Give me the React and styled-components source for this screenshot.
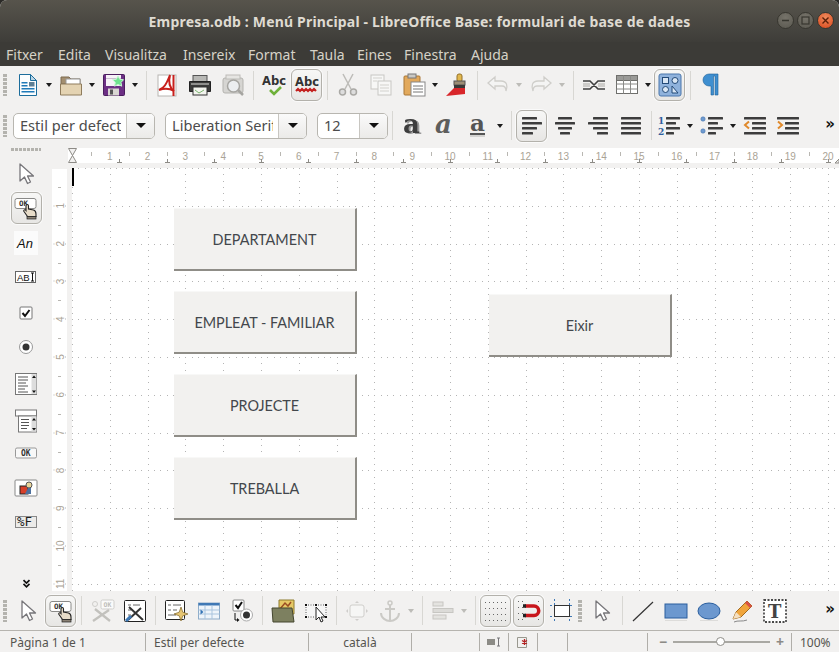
import styled, { createGlobalStyle } from "styled-components";

const GlobalStyle = createGlobalStyle`
  html, body {
    margin: 0;
    padding: 0;
    background: #2b2a27;
    overflow: hidden;
  }
`;

const UI_FONT = `"Noto Sans", "Open Sans", sans-serif`;

const Window = styled.div`
  width: 839px;
  height: 652px;
  display: flex;
  flex-direction: column;
  background: #f2f1f0;
  border-radius: 7px 7px 0 0;
  overflow: hidden;
  font-family: ${UI_FONT};
`;

const TitleBar = styled.div`
  height: 42px;
  position: relative;
  display: flex;
  align-items: center;
  justify-content: center;
  background: linear-gradient(#57544c, #3e3d39);
  color: #dfdbd2;
  font-size: 14px;
  font-weight: 700;
  letter-spacing: 0.18px;
  box-sizing: border-box;
`;

const WindowButtons = styled.div`
  position: absolute;
  right: 5px;
  top: 12px;
  display: flex;
  gap: 3px;
`;

const WinBtn = styled.div`
  width: 17px;
  height: 17px;
  border-radius: 50%;
  box-sizing: border-box;
  border: 1px solid #37362f;
  background: ${(p) => (p.$close ? "radial-gradient(circle at 50% 30%, #f08a5c, #d9481c)" : "radial-gradient(circle at 50% 30%, #76736a, #5a5850)")};
  display: flex;
  align-items: center;
  justify-content: center;
`;

const MenuBar = styled.div`
  height: 24px;
  background: #3c3b37;
  display: flex;
  align-items: flex-start;
  padding: 3px 0 0 6px;
  box-sizing: border-box;
`;

const MenuItem = styled.span`
  width: ${(p) => p.$w}px;
  color: #d6d2c7;
  font-size: 14px;
  line-height: 19px;
  white-space: nowrap;
  font-family: ${UI_FONT};
`;

const Toolbar = styled.div`
  height: ${(p) => p.$h}px;
  flex: none;
  display: flex;
  align-items: center;
  padding: 0 3px;
  box-sizing: border-box;
  background: #f2f1f0;
`;

const Handle = styled.div`
  width: 4px;
  height: 22px;
  margin-right: ${(p) => p.$mr ?? 4}px;
  flex: none;
  background: repeating-linear-gradient(#b4b3ae 0 3px, transparent 3px 4px);
`;

const ToolBtn = styled.div`
  width: ${(p) => p.$w ?? 33}px;
  height: ${(p) => p.$w ?? 33}px;
  flex: none;
  display: flex;
  align-items: center;
  justify-content: center;
  box-sizing: border-box;
  border-radius: 6px;
  ${(p) =>
    p.$on &&
    `
    width: 31px;
    height: 32px;
    margin: 0 1px;
    border: 1px solid #b3b1ab;
    background: linear-gradient(#f7f7f6, #e7e6e4);
    box-shadow: 0 0 0 1px #fafafa;
  `}
`;

const DropArrow = styled.div`
  width: 10px;
  flex: none;
  display: flex;
  justify-content: center;
  &::after {
    content: "";
    border-left: 3.5px solid transparent;
    border-right: 3.5px solid transparent;
    border-top: 4px solid ${(p) => (p.$off ? "#bdbcb8" : "#1c1c1c")};
  }
`;

const Sep = styled.div`
  width: 1px;
  height: 29px;
  flex: none;
  margin: 0 ${(p) => p.$r ?? 3.5}px 0 ${(p) => p.$l ?? 3.5}px;
  background: #d8d7d3;
`;

const Combo = styled.div`
  width: ${(p) => p.$w}px;
  height: 26px;
  flex: none;
  margin-right: ${(p) => p.$mr ?? 0}px;
  display: flex;
  box-sizing: border-box;
  border: 1px solid #b8b6b0;
  border-radius: 5px;
  background: #fff;
  overflow: hidden;
`;

const ComboText = styled.div`
  flex: 1;
  padding-left: 6px;
  font-size: 14.6px;
  line-height: 23px;
  color: #4c4c4c;
  white-space: nowrap;
  overflow: hidden;
  margin-right: 5px;
`;

const ComboArrow = styled.div`
  width: 27px;
  flex: none;
  display: flex;
  align-items: center;
  justify-content: center;
  border-left: 1px solid #c8c6c1;
  background: linear-gradient(#fafafa, #ebeae8);
  &::after {
    content: "";
    border-left: 5px solid transparent;
    border-right: 5px solid transparent;
    border-top: 5px solid #111;
  }
`;

const Chevrons = styled.div`
  margin-left: auto;
  margin-right: 1px;
  color: #111;
  font-size: 15px;
  font-weight: 700;
  line-height: 15px;
  font-family: "DejaVu Sans", sans-serif;
  padding-bottom: 3px;
`;

const Work = styled.div`
  flex: 1;
  display: flex;
  min-height: 0;
`;

const SideBar = styled.div`
  width: 52px;
  flex: none;
  display: flex;
  flex-direction: column;
  align-items: center;
  padding: 1px 0 0;
  box-sizing: border-box;
  background: #f2f1f0;
`;

const SideHandle = styled.div`
  width: 30px;
  height: 3px;
  flex: none;
  margin-bottom: 6px;
  background: repeating-linear-gradient(90deg, #b4b3ae 0 3px, transparent 3px 4px);
`;

const SideSlot = styled.div`
  width: 33px;
  height: ${(p) => p.$h}px;
  flex: none;
  display: flex;
  align-items: center;
  justify-content: center;
`;

const OnBox = styled.div`
  width: 31px;
  height: 32px;
  display: flex;
  align-items: center;
  justify-content: center;
  box-sizing: border-box;
  border: 1px solid #b3b1ab;
  border-radius: 6px;
  background: linear-gradient(#f7f7f6, #e7e6e4);
  box-shadow: 0 0 0 1px #fafafa;
`;

const LabelChip = styled.div`
  background: #fbfbfb;
  display: flex;
`;

const SideChevron = styled.div`
  margin-top: auto;
  margin-bottom: 3px;
`;

const DocArea = styled.div`
  flex: 1;
  display: flex;
  flex-direction: column;
  min-width: 0;
`;

const RulerSvg = styled.svg`
  display: block;
  flex: none;
  text {
    font-family: "Liberation Sans", sans-serif;
    font-size: 10px;
    fill: #aaa396;
  }
`;

const DocRow = styled.div`
  flex: 1;
  display: flex;
  min-height: 0;
`;

const Canvas = styled.div`
  flex: 1;
  position: relative;
  background: #fff;
  display: flex;
  padding: 40px 0 0 102px;
  box-sizing: border-box;
  overflow: hidden;
`;

const DotLayer = styled.svg`
  position: absolute;
  left: 0;
  top: 0;
`;

const Caret = styled.div`
  position: absolute;
  left: 0;
  top: 0;
  width: 1.5px;
  height: 18px;
  background: #000;
`;

const ButtonColumn = styled.div`
  display: flex;
  flex-direction: column;
  gap: 20px;
  position: relative;
  margin-top: ${(p) => p.$top ?? 0}px;
  margin-left: ${(p) => p.$left ?? 0}px;
`;

const FormButton = styled.div`
  width: 183px;
  height: 63px;
  box-sizing: border-box;
  display: flex;
  align-items: center;
  justify-content: center;
  background: #f2f1ef;
  border-right: 2px solid #8f8d87;
  border-bottom: 2px solid #8f8d87;
  border-top: 1px solid #f8f8f7;
  color: #43474c;
  font-family: "Lato", "Open Sans", sans-serif;
  font-size: 14.4px;
`;

const StatusBar = styled.div`
  height: 22px;
  flex: none;
  display: flex;
  box-sizing: border-box;
  border-top: 1px solid #b6b4af;
  background: #f2f1f0;
  color: #55544f;
  font-size: 12px;
`;

const StatusCell = styled.div`
  width: ${(p) => p.$w}px;
  flex: none;
  box-sizing: border-box;
  display: flex;
  align-items: center;
  justify-content: ${(p) => p.$align ?? "flex-start"};
  padding-left: ${(p) => p.$pl ?? 0}px;
  margin: 2px 0 1px;
  border-right: ${(p) => (p.$last ? "none" : "1px solid #b0aea9")};
  line-height: 17px;
  white-space: nowrap;
`;

const ZoomTrack = styled.div`
  width: 97px;
  height: 2px;
  position: relative;
  background: #a9a8a3;
  margin: 0 5px;
`;

const ZoomThumb = styled.div`
  position: absolute;
  left: 43px;
  top: -4px;
  width: 9px;
  height: 9px;
  box-sizing: border-box;
  border-radius: 50%;
  border: 1px solid #8f8e89;
  background: #fff;
`;

const ZoomSign = styled.span`
  color: #8c8b86;
  font-weight: 700;
  font-size: 14px;
  line-height: 14px;
  width: 10px;
  text-align: center;
`;

const IconSvg = styled.svg`
  display: block;
  flex: none;
  overflow: visible;
  text {
    font-family: "DejaVu Sans", sans-serif;
  }
  text.mono {
    font-family: "DejaVu Sans Mono", monospace;
  }
  text.serif {
    font-family: "DejaVu Serif", serif;
  }
  text.sans {
    font-family: "Liberation Sans", sans-serif;
  }
`;

const Icon = ({ children, s = 24 }) => (
  <IconSvg width={s} height={s} viewBox="0 0 24 24">
    {children}
  </IconSvg>
);

// stacked bars used by the alignment and list icons
const Bars = ({ rows, color = "#3d3d3d" }) =>
  rows.map(([x, y, w], i) => <rect key={i} x={x} y={y} width={w} height="2.4" fill={color} rx="0.5" />);

const CursorIcon = () => (
  <Icon>
    <path d="M6 2v17l4.5-4 3 6.5 3-1.500-3-6h6z" fill="#fff" stroke="#77767a" strokeWidth="1.3" strokeLinejoin="round" />
  </Icon>
);

const OkHandIcon = () => (
  <Icon>
    <rect x="1" y="2.500" width="21" height="10" rx="2" fill="#fff" stroke="#8a8a88" />
    <text className="mono" x="5" y="10" fontSize="7.5" fontWeight="700" fill="#333">OK</text>
    <path d="M12 10c0-2 2.500-2 2.500 0v3l5 1c2 .5 2.500 2 2.500 4v2.500h-8.500l-3.500-5c-1-1.500 1-2.500 2-1z" fill="#e7dcc9" stroke="#222" strokeWidth="1.100" />
    <rect x="13" y="20.500" width="9" height="2.500" fill="#8a8175" stroke="#222" strokeWidth="0.700" />
  </Icon>
);

const icons = {
  newDoc: (
    <Icon>
      <path d="M3.500 1.500h11l6 6v15h-17z" fill="#fbfdfe" stroke="#1c6d9c" />
      <path d="M14.500 1.500v6h6z" fill="#bcd6e6" stroke="#1c6d9c" />
      <rect x="5.500" y="9" width="6" height="1.500" fill="#1f7ab8" />
      <rect x="5.500" y="12" width="6" height="1.500" fill="#1f7ab8" />
      <rect x="5.500" y="15" width="13" height="1.500" fill="#1f7ab8" />
      <rect x="5.500" y="18" width="13" height="1.500" fill="#1f7ab8" />
      <rect x="13" y="9" width="5.500" height="4.500" fill="#5d7f95" />
    </Icon>
  ),
  open: (
    <Icon>
      <path d="M2 4h8l2 2h9v5H2z" fill="#a48f6f" stroke="#7d6b50" />
      <rect x="7" y="6" width="14" height="7" fill="#fff" stroke="#999" />
      <path d="M1.500 11h21v11h-21z" fill="#e4d3b2" stroke="#8f7c5c" />
    </Icon>
  ),
  save: (
    <Icon>
      <rect x="1.500" y="1.500" width="21" height="21" rx="1" fill="#6c2f84" stroke="#4b1e5e" />
      <rect x="4" y="2" width="15" height="11" fill="#f6f2f7" />
      <rect x="4" y="5" width="15" height="1" fill="#c9bdd0" />
      <rect x="6" y="15.500" width="11" height="7" fill="#d9d6d2" />
      <rect x="8" y="16.500" width="3" height="5" fill="#555" />
      <path d="M16 3l1.800 3.300 3.700.4-2.500 2.800.7 3.700-3.700-1.800-3.400 1.800.7-3.700-2.700-2.800 3.700-.4z" fill="#6fe28f" stroke="#c6f5d2" />
    </Icon>
  ),
  pdf: (
    <Icon>
      <rect x="3" y="2" width="18" height="21" fill="#fff" stroke="#b8b6b2" />
      <path d="M15 2C11 12 9 15 4 17c6-2 10-2 15 1-4-3-6-8-4-16z" fill="none" stroke="#c8201c" strokeWidth="2" />
      <path d="M18.500 2v21" stroke="#c8201c" strokeWidth="2" />
    </Icon>
  ),
  print: (
    <Icon>
      <rect x="5" y="2.500" width="14" height="6" fill="#b8b8b5" stroke="#555" />
      <path d="M1.500 8.500h21v10h-21z" fill="#3b3b3a" stroke="#222" />
      <rect x="3" y="10" width="18" height="2" fill="#8f8f8d" />
      <rect x="5" y="14" width="14" height="8" fill="#f3f4ee" stroke="#333" />
      <path d="M7 17l4 3 5-3" stroke="#7cb56f" fill="none" />
    </Icon>
  ),
  preview: (
    <Icon>
      <rect x="2" y="5" width="20" height="15" rx="2" fill="#d6d5d2" stroke="#b4b3af" />
      <rect x="5" y="2" width="14" height="4" fill="#e6e5e2" stroke="#bdbcb8" />
      <circle cx="12.500" cy="13" r="6" fill="#eceef0" stroke="#a6a5a1" strokeWidth="1.500" />
      <path d="M17 17l5 5" stroke="#a6a5a1" strokeWidth="2.500" />
    </Icon>
  ),
  abcCheck: (
    <Icon>
      <text x="0" y="12" fontSize="11.5" fontWeight="700" fill="#333">Abc</text>
      <path d="M8 17l4 4 7-7" fill="none" stroke="#6fb13a" strokeWidth="2.600" />
    </Icon>
  ),
  abcWave: (
    <Icon>
      <text x="0" y="13" fontSize="11.5" fontWeight="700" fill="#333">Abc</text>
      <path d="M1 18l2-2 2 2 2-2 2 2 2-2 2 2 2-2 2 2 2-2 2 2" fill="none" stroke="#c3201f" strokeWidth="2.200" />
    </Icon>
  ),
  cut: (
    <Icon>
      <path d="M7 1l8 15M17 1L9 16" stroke="#bdbcb8" strokeWidth="1.500" />
      <circle cx="6.500" cy="19" r="3" fill="#ddd" stroke="#aaa9a5" strokeWidth="1.500" />
      <circle cx="17.500" cy="19" r="3" fill="#ddd" stroke="#aaa9a5" strokeWidth="1.500" />
    </Icon>
  ),
  copy: (
    <Icon>
      <rect x="2" y="2" width="13" height="14" fill="#f7f7f6" stroke="#c8c7c3" />
      <rect x="9" y="8" width="13" height="14" fill="#f7f7f6" stroke="#c8c7c3" />
      <path d="M11 12h9M11 15h9M11 18h9M4 5h9M4 8h4" stroke="#d2d1cd" />
    </Icon>
  ),
  paste: (
    <Icon>
      <rect x="2" y="3" width="16" height="19" rx="1" fill="#e2a95c" stroke="#a97634" />
      <rect x="6" y="1" width="8" height="4" fill="#c9c8c4" stroke="#777" />
      <rect x="9" y="9" width="14" height="14" fill="#fff" stroke="#888" />
      <path d="M11 13h10M11 16h10M11 19h10" stroke="#777" />
    </Icon>
  ),
  brush: (
    <Icon>
      <rect x="12" y="1" width="5" height="8" rx="2" fill="#e2b84f" stroke="#94712a" />
      <rect x="9" y="8" width="11" height="4" fill="#9c8d74" stroke="#555" />
      <path d="M9 12h11v7H9z" fill="#393837" />
      <path d="M9 15h11v6L1 23z" fill="#d8262a" />
    </Icon>
  ),
  undo: (
    <Icon>
      <path d="M9 4L2 10l7 6v-3h7c3 0 4 2 4 5 2-5 1-10-5-10H9z" fill="#f4f4f3" stroke="#cfceca" strokeWidth="1.300" />
    </Icon>
  ),
  redo: (
    <Icon>
      <path d="M15 4l7 6-7 6v-3H8c-3 0-4 2-4 5-2-5-1-10 5-10h6z" fill="#f4f4f3" stroke="#cfceca" strokeWidth="1.300" />
    </Icon>
  ),
  link: (
    <Icon>
      <path d="M1 8h7l8 8h7M1 16h7l8-8h7" fill="none" stroke="#3f3f3f" strokeWidth="1.600" />
      <path d="M1 11h7M16 11h7M1 13h7M16 13h7" stroke="#a9a8a4" />
    </Icon>
  ),
  table: (
    <Icon>
      <rect x="1.500" y="2.500" width="21" height="18" fill="#fff" stroke="#6f6f6c" />
      <rect x="1.500" y="2.500" width="21" height="5" fill="#9a9a97" stroke="#6f6f6c" />
      <path d="M8.500 2.500v18M15.500 2.500v18M1.500 11h21M1.500 16h21" stroke="#8a8a87" />
    </Icon>
  ),
  design: (
    <Icon>
      <rect x="1" y="1" width="22" height="22" rx="2" fill="#8fb2dc" stroke="#4a77ad" />
      <rect x="4.500" y="4.500" width="6" height="6" fill="#d9e6f4" stroke="#234a78" />
      <circle cx="17" cy="7.500" r="3" fill="#d9e6f4" stroke="#234a78" />
      <circle cx="7.500" cy="16.500" r="3" fill="#d9e6f4" stroke="#234a78" />
      <path d="M14 20V13l6 7z" fill="#d9e6f4" stroke="#234a78" />
    </Icon>
  ),
  pilcrow: (
    <Icon>
      <path d="M19 1H10a6 6 0 0 0 0 12h2v9h2.500V3H16v19h3z" fill="#3f8fd0" stroke="#1c5f97" strokeWidth="0.600" />
    </Icon>
  ),
  aShadow: (
    <Icon>
      <text className="serif" x="2" y="19" fontSize="26" fontWeight="700" fill="#3d3d3d" style={{ filter: "drop-shadow(2px 1px 0 #999)" }}>a</text>
    </Icon>
  ),
  aItalic: (
    <Icon>
      <text className="serif" x="1" y="19" fontSize="26" fontWeight="700" fontStyle="italic" fill="#5e5e5c">a</text>
    </Icon>
  ),
  aUnder: (
    <Icon>
      <text className="serif" x="3" y="17" fontSize="23" fontWeight="700" fill="#555">a</text>
      <rect x="3" y="19" width="15" height="2" fill="#555" />
      <rect x="3" y="21.500" width="15" height="1" fill="#b5b5b2" />
    </Icon>
  ),
  alignLeft: <Icon><Bars rows={[[2, 3, 15], [2, 8, 20], [2, 13, 15], [2, 18, 11]]} /></Icon>,
  alignCenter: <Icon><Bars rows={[[5, 3, 14], [2, 8, 20], [5, 13, 14], [7, 18, 10]]} /></Icon>,
  alignRight: <Icon><Bars rows={[[7, 3, 15], [2, 8, 20], [7, 13, 15], [11, 18, 11]]} /></Icon>,
  justify: <Icon><Bars rows={[[2, 3, 20], [2, 8, 20], [2, 13, 20], [2, 18, 20]]} /></Icon>,
  numList: (
    <Icon>
      <text className="serif" x="0" y="10" fontSize="9" fontWeight="700" fill="#2f5f9e">1</text>
      <text className="serif" x="0" y="21" fontSize="9" fontWeight="700" fill="#2f5f9e">2</text>
      <Bars rows={[[8, 3, 14], [8, 8, 10], [8, 13, 14], [8, 18, 8]]} />
    </Icon>
  ),
  bullets: (
    <Icon>
      <circle cx="3" cy="5" r="2.200" fill="#6f9bd1" stroke="#3d6ba5" strokeWidth="0.500" />
      <circle cx="3" cy="17" r="2.200" fill="#6f9bd1" stroke="#3d6ba5" strokeWidth="0.500" />
      <Bars rows={[[8, 3, 15], [8, 8, 10], [8, 13, 15], [8, 18, 8]]} />
    </Icon>
  ),
  outdent: (
    <Icon>
      <Bars rows={[[1, 3, 22], [9, 8, 14], [9, 13, 14], [1, 18, 22]]} />
      <path d="M6 7.500L2 11l4 3.500" fill="none" stroke="#e08a2c" strokeWidth="2" />
    </Icon>
  ),
  indent: (
    <Icon>
      <Bars rows={[[1, 3, 22], [9, 8, 14], [9, 13, 14], [1, 18, 22]]} />
      <path d="M2 7.500L6 11l-4 3.500" fill="none" stroke="#e08a2c" strokeWidth="2" />
    </Icon>
  ),
  tools: (
    <Icon>
      <rect x="11" y="1" width="13" height="9" rx="1.500" fill="#fafafa" stroke="#cfcecb" />
      <text className="mono" x="13.500" y="8" fontSize="6.5" fontWeight="700" fill="#bdbcb8">OK</text>
      <circle cx="5" cy="5" r="2.500" fill="none" stroke="#cfcecb" />
      <path d="M3 22L19 11M5 10l15 12" stroke="#c2c1bd" strokeWidth="2.300" />
    </Icon>
  ),
  formDesign: (
    <Icon>
      <rect x="1.500" y="1.500" width="21" height="21" rx="1" fill="#fff" stroke="#222" />
      <path d="M5 6h3M10 6h7M5 11h3M5 16h3" stroke="#666" />
      <path d="M5 21L18 9M6 8l14 13" stroke="#333" strokeWidth="2" />
      <path d="M3 22l5-5" stroke="#3d78b5" strokeWidth="3" />
    </Icon>
  ),
  wizard: (
    <Icon>
      <rect x="1.500" y="1.500" width="19" height="19" rx="1" fill="#fff" stroke="#222" />
      <path d="M4 6h3M9 6h8M4 11h3M9 11h4M4 16h8" stroke="#666" />
      <path d="M17 8l1.800 5.200L24 15l-5.200 1.800L17 22l-1.800-5.200L10 15l5.200-1.800z" fill="#e6c572" stroke="#7c6325" strokeWidth="0.700" />
    </Icon>
  ),
  dataTable: (
    <Icon>
      <rect x="1.500" y="4" width="21" height="16" fill="#eef4fa" stroke="#8eacc9" />
      <rect x="1.500" y="4" width="21" height="2.500" fill="#3f78b5" />
      <path d="M8 6.500V20M15 6.500V20M1.500 11h21M1.500 15h21" stroke="#a9c4de" />
      <path d="M3.500 10.500l3 2.500-3 2.500z" fill="#3273b5" />
    </Icon>
  ),
  activation: (
    <Icon>
      <rect x="3" y="1" width="11" height="11" rx="1" fill="#fff" stroke="#888" />
      <path d="M5.500 6l2.500 3 4-6" fill="none" stroke="#111" strokeWidth="2" />
      <circle cx="16.500" cy="16" r="6" fill="#fff" stroke="#aaa" />
      <circle cx="16.500" cy="16" r="3.500" fill="#333" />
      <path d="M5 14v7h3" fill="none" stroke="#111" />
      <path d="M7 19l2.500 2L7 23z" fill="#111" />
    </Icon>
  ),
  folder: (
    <Icon>
      <path d="M8 1h15v14H8z" fill="#e6c866" stroke="#8d7a2e" />
      <path d="M9 10l5-6 3 3 3-4" fill="none" stroke="#9b4d22" strokeWidth="1.500" />
      <path d="M1 9h20l2 14H2z" fill="#7d8060" stroke="#44462f" />
    </Icon>
  ),
  select: (
    <Icon>
      <rect x="1.500" y="5.500" width="21" height="13" fill="#f6f6f6" />
      <path d="M1 5h2v2H1zM11 5h2v2h-2zM21 5h2v2h-2zM1 17h2v2H1zM21 17h2v2h-2z" fill="#111" />
      <path d="M4 6h6M14 6h6M2 8v8M22 8v8M4 18h6" stroke="#555" strokeDasharray="1 1.500" />
      <path d="M12 8v13l3-3 2 5 2-1-2-4h4z" fill="#fff" stroke="#222" />
    </Icon>
  ),
  shapeOff: (
    <Icon>
      <rect x="5" y="6" width="14" height="12" rx="2" fill="#f6f6f5" stroke="#cfcecb" />
      <path d="M12 2l2 2h-4zM12 22l2-2h-4zM1 12l2-2v4zM23 12l-2-2v4z" fill="#cfcecb" />
    </Icon>
  ),
  anchor: (
    <Icon>
      <circle cx="12" cy="4" r="2" fill="none" stroke="#cbcac6" strokeWidth="1.500" />
      <path d="M12 6v16M7 10h10M3 14c0 5 5 8 9 8s9-3 9-8" fill="none" stroke="#cbcac6" strokeWidth="2" />
    </Icon>
  ),
  alignObj: (
    <Icon>
      <rect x="2" y="3" width="10" height="4" fill="#e4e3e0" stroke="#c7c6c2" />
      <rect x="2" y="9.500" width="20" height="4" fill="#dcdbd8" stroke="#c7c6c2" />
      <rect x="2" y="16" width="13" height="4" fill="#e4e3e0" stroke="#c7c6c2" />
    </Icon>
  ),
  grid: (
    <Icon>
      {[1, 5, 9, 13, 17, 21].map((x) =>
        [3, 9, 15, 21].map((y) => <rect key={`${x}-${y}`} x={x} y={y} width="1" height="1" fill="#666" />)
      )}
    </Icon>
  ),
  magnet: (
    <Icon>
      {[1, 5, 21].map((x) =>
        [2, 8, 14, 20].map((y) => <rect key={`${x}-${y}`} x={x} y={y} width="1" height="1" fill="#666" />)
      )}
      <path d="M8 7h9a4.500 4.500 0 0 1 0 9.500H8" fill="none" stroke="#c8161c" strokeWidth="3.500" />
      <path d="M6 7h3M6 16.500h3" stroke="#222" strokeWidth="3.500" />
    </Icon>
  ),
  guides: (
    <Icon>
      <path d="M0 6.500h24M0 17.500h24M4.500 0v24M19.500 0v24" stroke="#3f78b5" strokeDasharray="2 2" />
      <rect x="4.500" y="6.500" width="15" height="11" fill="#fff" stroke="#333" />
    </Icon>
  ),
  line: (
    <Icon>
      <path d="M2 22L22 3" stroke="#333" strokeWidth="1.200" />
    </Icon>
  ),
  rect: (
    <Icon>
      <rect x="1" y="5" width="22" height="14" fill="#6c98cf" stroke="#2b5f9e" />
      <rect x="1" y="21" width="22" height="1" fill="#dddcda" />
    </Icon>
  ),
  ellipse: (
    <Icon>
      <ellipse cx="12" cy="12" rx="11" ry="8" fill="#6c98cf" stroke="#2b5f9e" />
      <rect x="3" y="21" width="18" height="1" fill="#dddcda" />
    </Icon>
  ),
  pencil: (
    <Icon>
      <path d="M3 20l3-7L17 2l5 5L11 18z" fill="#f0a53c" stroke="#a36a1e" />
      <path d="M17 2l5 5-2 2-5-5z" fill="#d95045" />
      <path d="M3 20l3-7 5 5z" fill="#f4dfc0" />
      <path d="M4 23c4-2 8 0 13-2" stroke="#888" fill="none" />
    </Icon>
  ),
  textBox: (
    <Icon>
      <rect x="1" y="1" width="22" height="22" fill="#fff" stroke="#111" strokeDasharray="2 1.500" strokeWidth="1.300" />
      <text className="serif" x="5" y="19" fontSize="18" fontWeight="700" fill="#444">T</text>
    </Icon>
  ),
  label: (
    <LabelChip>
      <Icon>
        <text className="sans" x="3" y="17" fontSize="13" fontStyle="italic" fill="#111">An</text>
      </Icon>
    </LabelChip>
  ),
  textField: (
    <Icon>
      <rect x="1.500" y="6.500" width="20" height="11" fill="#fff" stroke="#666" />
      <text className="sans" x="3" y="15.5" fontSize="9.5" fill="#111">AB</text>
      <path d="M17 8h3M17 16h3M18.500 8v8" stroke="#111" />
    </Icon>
  ),
  checkBox: (
    <Icon>
      <rect x="6" y="6" width="12" height="12" rx="1" fill="#fff" stroke="#777" />
      <path d="M8.500 12l2.500 3 4.500-6" fill="none" stroke="#111" strokeWidth="2" />
    </Icon>
  ),
  radio: (
    <Icon>
      <circle cx="12" cy="12" r="6.500" fill="#fff" stroke="#999" />
      <circle cx="12" cy="12" r="3.500" fill="#333" />
    </Icon>
  ),
  listBox: (
    <Icon>
      <rect x="1.500" y="1.500" width="21" height="21" fill="#fff" stroke="#777" />
      <path d="M4 5h10M4 8h10M4 11h8M4 14h10M4 17h7M4 20h10" stroke="#555" />
      <rect x="17.500" y="2" width="5" height="20" fill="#ddd" />
      <path d="M20 3.500l2 2.500h-4zM20 21l2-2.500h-4z" fill="#111" />
    </Icon>
  ),
  comboBox: (
    <Icon>
      <rect x="1.500" y="1" width="21" height="6" fill="#fff" stroke="#777" />
      <rect x="4.500" y="7" width="18" height="16" fill="#fff" stroke="#777" />
      <path d="M7 10.500h8M7 13.500h8M7 16.500h8M7 19.500h6" stroke="#555" />
      <rect x="17.500" y="7.500" width="5" height="15" fill="#ddd" />
      <path d="M20 9l2 2.500h-4zM20 21.500l2-2.500h-4z" fill="#111" />
    </Icon>
  ),
  pushBtn: (
    <Icon>
      <rect x="1.500" y="7" width="21" height="10" rx="1.500" fill="#f8f8f8" stroke="#999" />
      <text className="mono" x="7" y="15" fontSize="8" fontWeight="700" fill="#333">OK</text>
    </Icon>
  ),
  imgBtn: (
    <Icon>
      <rect x="1" y="4" width="22" height="16" rx="1" fill="#fff" stroke="#888" />
      <rect x="6" y="10" width="8" height="8" fill="#d8402a" stroke="#222" />
      <circle cx="15" cy="9" r="3" fill="#e9d59a" stroke="#555" />
      <path d="M11 18l3-6h3v6z" fill="#4c6f9c" />
    </Icon>
  ),
  formatted: (
    <Icon>
      <rect x="1.500" y="6.500" width="21" height="11" fill="#ecebe9" stroke="#888" />
      <text className="mono" x="3" y="16" fontSize="12.5" fill="#222">%F</text>
    </Icon>
  ),
  doubleDown: (
    <Icon s={9}>
      <path d="M4 3l8 8 8-8M4 13l8 8 8-8" fill="none" stroke="#111" strokeWidth="4.5" />
    </Icon>
  ),
};

const MENU = [
  ["Fitxer", 52],
  ["Edita", 47],
  ["Visualitza", 78],
  ["Insereix", 65],
  ["Format", 62],
  ["Taula", 47],
  ["Eines", 47],
  ["Finestra", 67],
  ["Ajuda", 50],
];

const SIDE_ITEMS = [
  ["label", 36],
  ["textField", 32],
  ["checkBox", 40],
  ["radio", 28],
  ["listBox", 46],
  ["comboBox", 28],
  ["pushBtn", 36],
  ["imgBtn", 34],
  ["formatted", 34],
];
const FORM_BUTTONS = ["DEPARTAMENT", "EMPLEAT - FAMILIAR", "PROJECTE", "TREBALLA"];

const CM = 37.8;
const CANVAS_W = 767;
const CANVAS_H = 423;

// grid dots: a dotted line each cm, with a dot each sixth of a cm
function gridPath() {
  let d = "";
  const dot = (x, y) => {
    d += `M${Math.round(x)} ${Math.round(y)}h1v1h-1z`;
  };
  for (let i = 0; i * CM < CANVAS_W; i++) {
    for (let j = 0; (j * CM) / 6 < CANVAS_H; j++) dot(i * CM, (j * CM) / 6);
  }
  for (let j = 0; j * CM < CANVAS_H; j++) {
    for (let i = 0; (i * CM) / 6 < CANVAS_W; i++) dot((i * CM) / 6, j * CM);
  }
  return d;
}

function HorizontalRuler() {
  const numbers = Array.from({ length: 20 }, (_, i) => i + 1);
  const tabs = Array.from({ length: 16 }, (_, i) => 20 + (i + 1) * 47.25);
  return (
    <RulerSvg width="787" height="21" viewBox="0 0 787 21">
      <rect x="16" y="1" width="771" height="15" fill="#fff" />
      {numbers.map((n) => (
        <text key={n} x={20 + n * CM} y="12.5" textAnchor="middle">{n}</text>
      ))}
      {numbers.map((n) => (
        <rect key={n} x={Math.round(20 + (n - 0.5) * CM)} y="5" width="1" height="4" fill="#b9b7b2" />
      ))}
      {tabs.map((x) => (
        <path key={x} d={`M${Math.round(x) + 0.5} 12v3.5M${Math.round(x) - 2} 15.5h5`} stroke="#8d8b86" />
      ))}
      <path d="M16.500 1.500h8l-4 7 4 7h-8l4-7z" fill="#f2f1f0" stroke="#8d8b86" />
      <path d="M783 16l4-4v4z" fill="#f2f1f0" stroke="#8d8b86" />
    </RulerSvg>
  );
}

function VerticalRuler() {
  const numbers = Array.from({ length: 11 }, (_, i) => i + 1);
  return (
    <RulerSvg width="20" height={CANVAS_H} viewBox={`0 0 20 ${CANVAS_H}`}>
      <rect x="0" y="1" width="15" height="422" fill="#fff" />
      {numbers.map((n) => (
        <text key={n} transform={`translate(11.5 ${n * CM}) rotate(-90)`} textAnchor="middle">{n}</text>
      ))}
      {numbers.map((n) => (
        <rect key={n} x="6" y={Math.round((n - 0.5) * CM)} width="3" height="1" fill="#b9b7b2" />
      ))}
      {numbers.map((n) => (
        <path key={n} d={`M1.500 ${Math.round(n * CM)}h1M13 ${Math.round(n * CM)}h1`} stroke="#b3b3b3" />
      ))}
    </RulerSvg>
  );
}

function App() {
  return (
    <>
      <GlobalStyle />
      <Window>
        <TitleBar>
          Empresa.odb : Menú Principal - LibreOffice Base: formulari de base de dades
          <WindowButtons>
            <WinBtn>
              <svg width="9" height="9" viewBox="0 0 9 9"><path d="M1 4.500h7" stroke="#37362f" strokeWidth="1.400" /></svg>
            </WinBtn>
            <WinBtn>
              <svg width="9" height="9" viewBox="0 0 9 9"><rect x="1" y="1" width="7" height="7" fill="none" stroke="#37362f" strokeWidth="1.200" /></svg>
            </WinBtn>
            <WinBtn $close>
              <svg width="9" height="9" viewBox="0 0 9 9"><path d="M1.500 1.500l6 6M7.500 1.500l-6 6" stroke="#5c2009" strokeWidth="1.400" /></svg>
            </WinBtn>
          </WindowButtons>
        </TitleBar>
        <MenuBar>
          {MENU.map(([label, w]) => (
            <MenuItem key={label} $w={w}>{label}</MenuItem>
          ))}
        </MenuBar>

        <Toolbar $h={38}>
          <Handle />
          <ToolBtn>{icons.newDoc}</ToolBtn>
          <DropArrow />
          <ToolBtn>{icons.open}</ToolBtn>
          <DropArrow />
          <ToolBtn>{icons.save}</ToolBtn>
          <DropArrow />
          <Sep $l={6} $r={3} />
          <ToolBtn>{icons.pdf}</ToolBtn>
          <ToolBtn>{icons.print}</ToolBtn>
          <ToolBtn>{icons.preview}</ToolBtn>
          <Sep />
          <ToolBtn>{icons.abcCheck}</ToolBtn>
          <ToolBtn $on>{icons.abcWave}</ToolBtn>
          <Sep />
          <ToolBtn>{icons.cut}</ToolBtn>
          <ToolBtn>{icons.copy}</ToolBtn>
          <ToolBtn>{icons.paste}</ToolBtn>
          <DropArrow />
          <ToolBtn>{icons.brush}</ToolBtn>
          <Sep />
          <ToolBtn>{icons.undo}</ToolBtn>
          <DropArrow $off />
          <ToolBtn>{icons.redo}</ToolBtn>
          <DropArrow $off />
          <Sep $l={6} $r={3} />
          <ToolBtn>{icons.link}</ToolBtn>
          <ToolBtn>{icons.table}</ToolBtn>
          <DropArrow />
          <ToolBtn $on>{icons.design}</ToolBtn>
          <Sep />
          <ToolBtn>{icons.pilcrow}</ToolBtn>
        </Toolbar>

        <Toolbar $h={43}>
          <Handle $mr={6} />
          <Combo $w={142} $mr={10}>
            <ComboText>Estil per defecte</ComboText>
            <ComboArrow />
          </Combo>
          <Combo $w={142} $mr={10}>
            <ComboText>Liberation Serif</ComboText>
            <ComboArrow />
          </Combo>
          <Combo $w={71}>
            <ComboText>12</ComboText>
            <ComboArrow />
          </Combo>
          <Sep />
          <ToolBtn>{icons.aShadow}</ToolBtn>
          <ToolBtn>{icons.aItalic}</ToolBtn>
          <ToolBtn>{icons.aUnder}</ToolBtn>
          <DropArrow />
          <Sep $l={6} $r={3} />
          <ToolBtn $on>{icons.alignLeft}</ToolBtn>
          <ToolBtn>{icons.alignCenter}</ToolBtn>
          <ToolBtn>{icons.alignRight}</ToolBtn>
          <ToolBtn>{icons.justify}</ToolBtn>
          <Sep />
          <ToolBtn $w={30}>{icons.numList}</ToolBtn>
          <DropArrow />
          <ToolBtn>{icons.bullets}</ToolBtn>
          <DropArrow />
          <ToolBtn>{icons.outdent}</ToolBtn>
          <ToolBtn>{icons.indent}</ToolBtn>
          <Chevrons>»</Chevrons>
        </Toolbar>

        <Work>
          <SideBar>
            <SideHandle />
            <SideSlot $h={34}><CursorIcon /></SideSlot>
            <SideSlot $h={34}><OnBox><OkHandIcon /></OnBox></SideSlot>
            {SIDE_ITEMS.map(([name, h]) => (
              <SideSlot key={name} $h={h}>{icons[name]}</SideSlot>
            ))}
            <SideChevron>{icons.doubleDown}</SideChevron>
          </SideBar>
          <DocArea>
            <HorizontalRuler />
            <DocRow>
              <VerticalRuler />
              <Canvas>
                <DotLayer width={CANVAS_W} height={CANVAS_H}>
                  <path d={gridPath()} fill="#b4b4b4" />
                </DotLayer>
                <Caret />
                <ButtonColumn>
                  {FORM_BUTTONS.map((label) => (
                    <FormButton key={label}>{label}</FormButton>
                  ))}
                </ButtonColumn>
                <ButtonColumn $top={86} $left={132}>
                  <FormButton>Eixir</FormButton>
                </ButtonColumn>
              </Canvas>
            </DocRow>
          </DocArea>
        </Work>

        <Toolbar $h={39}>
          <Handle />
          <ToolBtn><CursorIcon /></ToolBtn>
          <ToolBtn $on><OkHandIcon /></ToolBtn>
          <Sep />
          <ToolBtn>{icons.tools}</ToolBtn>
          <ToolBtn>{icons.formDesign}</ToolBtn>
          <Sep />
          <ToolBtn>{icons.wizard}</ToolBtn>
          <ToolBtn>{icons.dataTable}</ToolBtn>
          <ToolBtn>{icons.activation}</ToolBtn>
          <Sep />
          <ToolBtn>{icons.folder}</ToolBtn>
          <ToolBtn>{icons.select}</ToolBtn>
          <Sep />
          <ToolBtn>{icons.shapeOff}</ToolBtn>
          <ToolBtn>{icons.anchor}</ToolBtn>
          <DropArrow $off />
          <Sep $l={6} $r={3} />
          <ToolBtn>{icons.alignObj}</ToolBtn>
          <DropArrow $off />
          <Sep $l={6} $r={3} />
          <ToolBtn $on>{icons.grid}</ToolBtn>
          <ToolBtn $on>{icons.magnet}</ToolBtn>
          <ToolBtn>{icons.guides}</ToolBtn>
          <Handle $mr={3} />
          <ToolBtn>
            <CursorIcon />
          </ToolBtn>
          <Sep />
          <ToolBtn>{icons.line}</ToolBtn>
          <ToolBtn>{icons.rect}</ToolBtn>
          <ToolBtn>{icons.ellipse}</ToolBtn>
          <ToolBtn>{icons.pencil}</ToolBtn>
          <ToolBtn>{icons.textBox}</ToolBtn>
          <Chevrons>»</Chevrons>
        </Toolbar>

        <StatusBar>
          <StatusCell $w={146} $pl={10}>Pàgina 1 de 1</StatusCell>
          <StatusCell $w={163} $pl={8}>Estil per defecte</StatusCell>
          <StatusCell $w={103} $align="center">català</StatusCell>
          <StatusCell $w={68} />
          <StatusCell $w={29} $align="center">
            <svg width="14" height="10" viewBox="0 0 14 10"><rect x="0" y="2" width="8" height="6" fill="#8c8b86" /><path d="M10 1h3M10 9h3M11.500 1v8" stroke="#77767a" /></svg>
          </StatusCell>
          <StatusCell $w={29} $align="center">
            <svg width="12" height="13" viewBox="0 0 12 13"><path d="M.5 1.500h9v10h-9z" fill="none" stroke="#99988f" /><path d="M7.500 3v6M5 4.500l5 3M10 4.500l-5 3" stroke="#b22020" strokeWidth="1.300" /></svg>
          </StatusCell>
          <StatusCell $w={30} />
          <StatusCell $w={80} />
          <StatusCell $w={144} $pl={10}>
            <ZoomSign>−</ZoomSign>
            <ZoomTrack><ZoomThumb /></ZoomTrack>
            <ZoomSign>+</ZoomSign>
          </StatusCell>
          <StatusCell $w={47} $pl={8} $last>100%</StatusCell>
        </StatusBar>
      </Window>
    </>
  );
}

export default App;
